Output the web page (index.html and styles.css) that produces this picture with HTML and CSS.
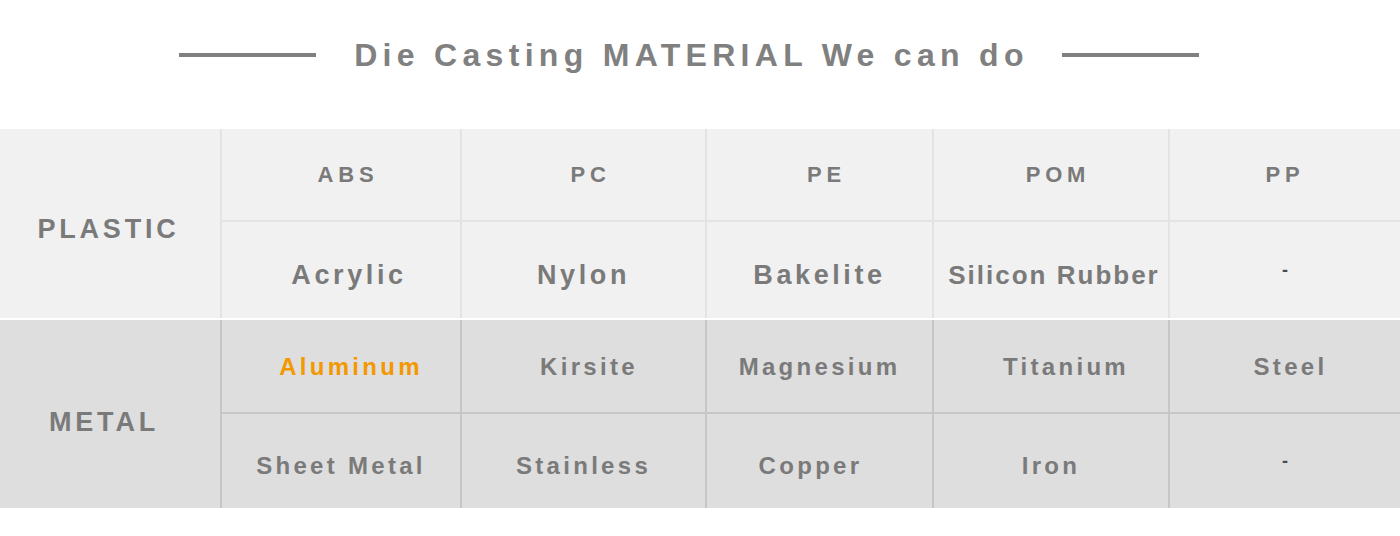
FILE: index.html
```html
<!DOCTYPE html>
<html lang="en">
<head>
<meta charset="utf-8">
<title>Die Casting MATERIAL We can do</title>
<link rel="stylesheet" href="styles.css">
</head>
<body>
<header class="heading">
  <span class="rule"></span>
  <h1 class="title">Die Casting MATERIAL We can do</h1>
  <span class="rule"></span>
</header>
<section class="materials">
  <div class="group plastic">
    <div class="label">PLASTIC</div>
    <div class="cell head">ABS</div>
    <div class="cell head">PC</div>
    <div class="cell head">PE</div>
    <div class="cell head">POM</div>
    <div class="cell head pp">PP</div>
    <div class="cell big shift-r">Acrylic</div>
    <div class="cell big">Nylon</div>
    <div class="cell big">Bakelite</div>
    <div class="cell big tight">Silicon Rubber</div>
    <div class="cell big"><span class="dash">-</span></div>
  </div>
  <div class="group metal">
    <div class="label">METAL</div>
    <div class="cell mid accent">Aluminum</div>
    <div class="cell mid shift-r-sm">Kirsite</div>
    <div class="cell mid">Magnesium</div>
    <div class="cell mid shift-r-lg">Titanium</div>
    <div class="cell mid shift-r-sm">Steel</div>
    <div class="cell mid">Sheet Metal</div>
    <div class="cell mid">Stainless</div>
    <div class="cell mid shift-l">Copper</div>
    <div class="cell mid">Iron</div>
    <div class="cell mid"><span class="dash">-</span></div>
  </div>
</section>
</body>
</html>
```

FILE: styles.css
```css
* {
  box-sizing: border-box;
}

html, body {
  margin: 0;
  padding: 0;
  background: #ffffff;
}

body {
  width: 1400px;
  height: 536px;
  overflow: hidden;
  font-family: "Liberation Sans", Arial, sans-serif;
  color: #7a7a7a;
}

.heading {
  height: 129px;
  display: flex;
  align-items: center;
  justify-content: center;
  gap: 38px;
  padding-bottom: 20px;
  padding-right: 22px;
}

.rule {
  width: 137px;
  height: 4px;
  background: #808080;
}

.title {
  margin: 0;
  font-size: 32px;
  font-weight: bold;
  letter-spacing: 5.3px;
  color: #808080;
  line-height: 40px;
  margin-right: -5px;
}

.materials {
  display: flex;
  flex-direction: column;
  gap: 2px;
}

.group {
  display: grid;
  grid-template-columns: 220px 240px 245px 227px 236px 1fr;
}

.plastic {
  grid-template-rows: 93px 96px;
  background: #f1f1f1;
}

.metal {
  grid-template-rows: 94px 94px;
  background: #dedede;
}

.label {
  grid-row: 1 / span 2;
  display: flex;
  align-items: center;
  justify-content: center;
  font-size: 27px;
  font-weight: bold;
  letter-spacing: 3.8px;
  padding-top: 11px;
  padding-right: 3px;
}

.metal .label {
  padding-top: 16px;
  padding-right: 12px;
}

.cell {
  display: flex;
  align-items: center;
  justify-content: center;
  font-weight: bold;
  border-left: 2px solid #e3e3e3;
  white-space: nowrap;
}

.plastic .cell:nth-child(-n+6) {
  border-bottom: 2px solid #e3e3e3;
}

.plastic .cell:nth-child(n+7) {
  padding-top: 10px;
}

.metal .cell {
  border-left-color: #c6c6c6;
}

.metal .cell:nth-child(-n+6) {
  border-bottom: 2px solid #c6c6c6;
  padding-top: 2px;
}

.metal .cell:nth-child(n+7) {
  padding-top: 10px;
}

.head {
  font-size: 22px;
  letter-spacing: 4.8px;
  padding-left: 14px;
}

.head.pp {
  padding-left: 0;
}

.big {
  font-size: 27px;
  letter-spacing: 3.6px;
}

.tight {
  font-size: 26px;
  letter-spacing: 2px;
  padding-left: 6px;
}

.mid {
  font-size: 24px;
  letter-spacing: 3.3px;
}

.accent {
  color: #f39800;
  padding-left: 20px;
}

.shift-r {
  padding-left: 16px;
}

.shift-r-sm {
  padding-left: 11px;
}

.shift-r-lg {
  padding-left: 30px;
}

.shift-l {
  padding-right: 18px;
}

.dash {
  color: #4a4a55;
  font-size: 18px;
  letter-spacing: 0;
  position: relative;
  top: -5px;
}
```
